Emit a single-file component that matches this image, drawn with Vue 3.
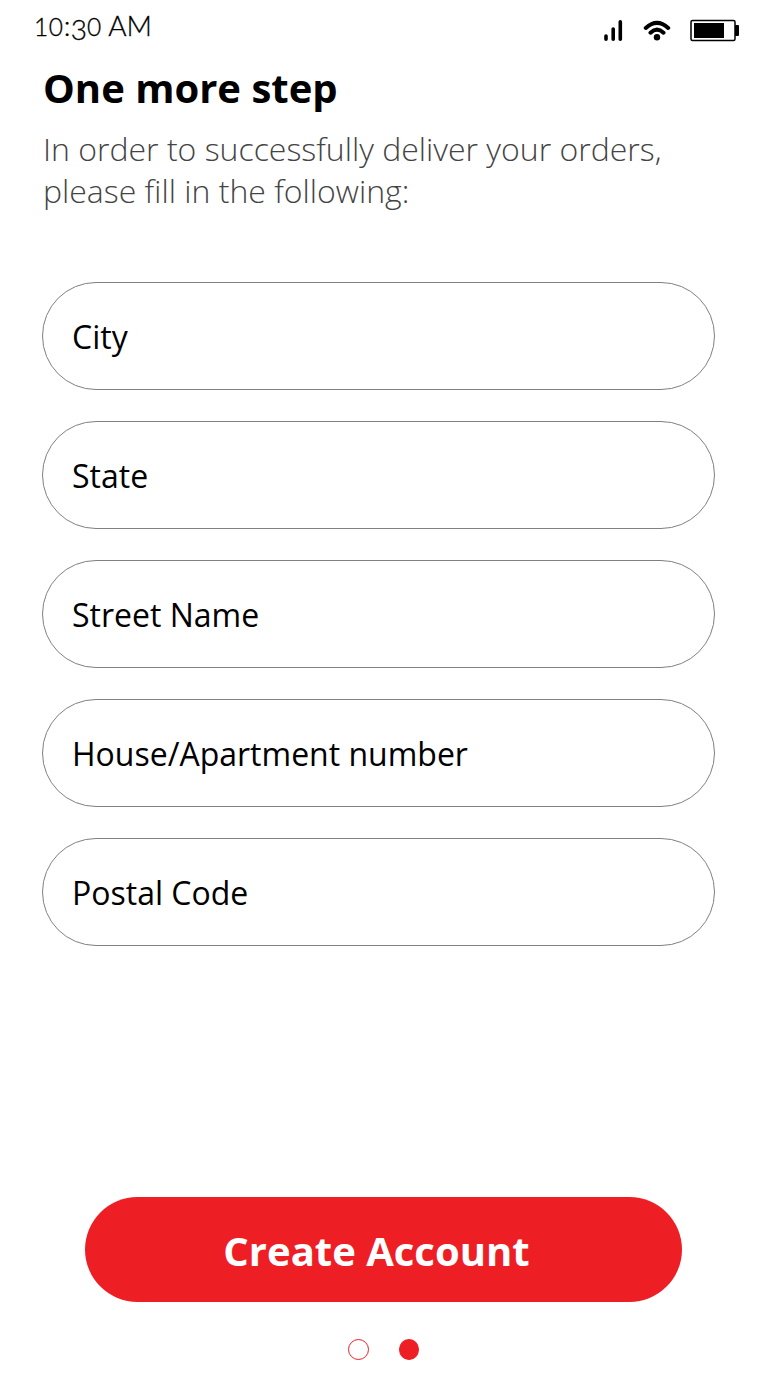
<script setup>
const fields = ['City', 'State', 'Street Name', 'House/Apartment number', 'Postal Code']
</script>

<template>
  <main class="screen">
    <header class="status">
      <span class="time"><span class="num">10</span><span class="colon">:</span><span class="num low">3</span><span class="num">0</span><span class="ampm"> AM</span></span>
      <svg class="icons" width="140" height="28" viewBox="600 16 140 28">
        <g stroke="#000" fill="none" stroke-linecap="round">
          <path stroke-width="3.6" d="M606 36V39.300M613.200 29V39.300M620.300 21.800V39.300" />
          <path stroke-width="4" d="M645.800 28Q657 17.800 668.200 28M650.500 32.700Q657 26.700 663.500 32.700" />
        </g>
        <circle cx="657" cy="37.200" r="3.200" />
        <rect x="691" y="20.500" width="44" height="20" rx="1.500" fill="none" stroke="#000" stroke-width="1.500" />
        <rect x="694" y="23" width="30" height="15" />
        <rect x="735" y="25" width="4" height="11" rx="1" />
      </svg>
    </header>
    <h1>One more step</h1>
    <p class="intro">In order to successfully deliver your orders,<br>please fill in the following:</p>
    <form class="fields" @submit.prevent>
      <div v-for="f in fields" :key="f" class="field"><span>{{ f }}</span></div>
    </form>
    <button class="create"><span>Create Account</span></button>
    <div class="dots"><i></i><i class="on"></i></div>
  </main>
</template>

<style scoped>
.screen { box-sizing: border-box; width: 767px; height: 1384px; background: #fff; color: #000; font-family: "Open Sans", sans-serif; overflow: hidden; }
.status { display: flex; justify-content: space-between; height: 60px; padding: 0 27px 0 34px; }
.time { display: flex; align-items: baseline; height: 36px; padding-top: 7px; font: 300 28px/36px Lato, sans-serif; white-space: pre; -webkit-text-stroke: 0.3px #000; }
.num { font-size: 24.5px; letter-spacing: 0.6px; }
.colon { width: 7px; }
.low { font-size: 28px; transform: translateY(4px); letter-spacing: 0; }
.ampm { letter-spacing: -0.1px; }
.icons { margin-top: 16px; }
h1 { margin: 0 0 0 43px; font-size: 40px; line-height: 56px; font-weight: 700; white-space: nowrap; }
.intro { margin: 12px 0 0 43px; font-size: 32px; line-height: 42px; font-weight: 300; color: #444; white-space: nowrap; }
.fields { display: flex; flex-direction: column; gap: 31px; margin: 70px 0 0 42px; width: 673px; }
.field { box-sizing: border-box; height: 108px; border: 1px solid #808080; border-radius: 54px; padding-left: 29px; font-size: 32px; line-height: 108px; white-space: nowrap; }
.create { display: block; width: 597px; height: 105px; margin: 251px 0 0 85px; padding: 0 14px 0 0; border: 0; border-radius: 53px; background: #ee1e25; color: #fff; font: 700 40px/108px "Open Sans", sans-serif; }
.dots { display: flex; gap: 30px; margin: 37px 0 0 348px; }
.dots i { box-sizing: border-box; width: 21px; height: 21px; border: 1px solid #ee1e25; border-radius: 50%; }
.dots .on { width: 20px; background: #ee1e25; }
</style>
